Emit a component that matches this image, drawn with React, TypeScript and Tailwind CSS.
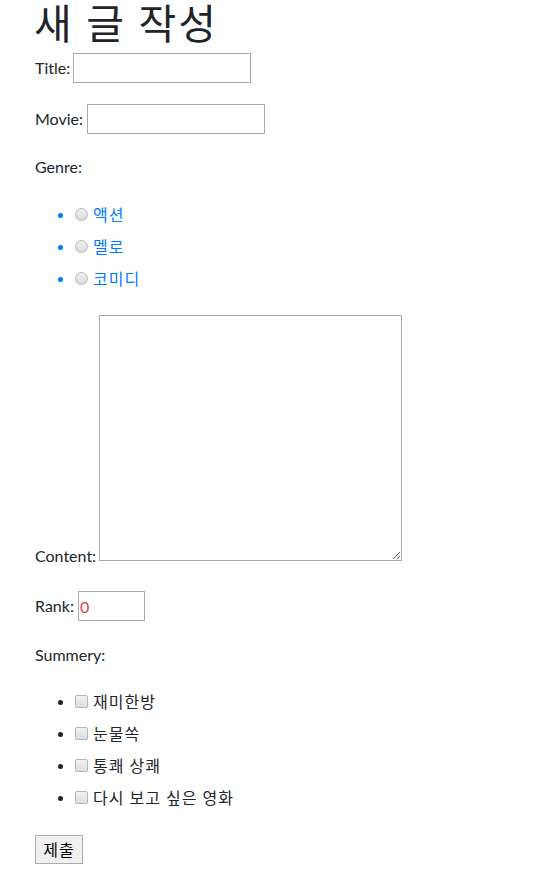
import React from "react";

const font = { fontFamily: 'Lato, "Noto Sans CJK KR", sans-serif' };

export default function App() {
  const genres = ["액션", "멜로", "코미디"];
  const summaries = ["재미한방", "눈물쏙", "통쾌 상쾌", "다시 보고 싶은 영화"];
  return (
    <div
      className="flex flex-col px-[35px] text-[16px] text-[#212529] bg-white min-h-[871px]"
      style={font}
    >
      <h1 className="text-[41px] leading-[48px] font-normal tracking-[2px] -ml-[1px] whitespace-nowrap">새 글 작성</h1>

      <div className="mt-[5px] flex items-center h-[30px]">
        <span className="leading-6">Title:</span>
        <input type="text" className="ml-[3px] w-[178px] h-[30px] border border-[#a9a9a9] outline-none" />
      </div>

      <div className="mt-[21px] flex items-center h-[30px]">
        <span className="leading-6">Movie:</span>
        <input type="text" className="ml-[4px] w-[178px] h-[30px] border border-[#a9a9a9] outline-none" />
      </div>

      <div className="mt-[21px] h-6 leading-6">Genre:</div>

      <ul className="mt-[19px] pl-[40px] list-disc marker:text-[#007bff]">
        {genres.map((g) => (
          <li key={g} className="h-[32px] leading-[32px] text-[#007bff]">
            <span className="inline-flex items-center align-middle h-[32px] -mt-[2px]">
              <input
                type="radio"
                name="genre"
                className="appearance-none w-[13px] h-[13px] rounded-full border border-[#b5b5b5] bg-gradient-to-b from-[#f2f2f2] to-[#d9d9d9] m-0"
              />
              <span className="ml-[5px] leading-6 tracking-[1px]">{g}</span>
            </span>
          </li>
        ))}
      </ul>

      <div className="mt-[21px] flex items-end">
        <span className="leading-6 -mb-[7px]">Content:</span>
        <textarea className="ml-[3px] w-[303px] h-[246px] border border-[#a9a9a9] outline-none resize-y" />
      </div>

      <div className="mt-[30px] flex items-center h-[30px]">
        <span className="leading-6">Rank:</span>
        <input
          type="number"
          defaultValue={0}
          className="ml-[4px] w-[67px] h-[30px] border border-[#a9a9a9] outline-none pl-[1px] text-[#e0434b] [appearance:textfield]"
        />
      </div>

      <div className="mt-[22px] h-6 leading-6">Summery:</div>

      <ul className="mt-[18px] pl-[40px] list-disc">
        {summaries.map((s) => (
          <li key={s} className="h-[32px] leading-[32px]">
            <span className="inline-flex items-center align-middle h-[32px] -mt-[2px]">
              <input
                type="checkbox"
                className="appearance-none w-[13px] h-[13px] rounded-[2px] border border-[#b5b5b5] bg-gradient-to-b from-[#f2f2f2] to-[#dcdcdc] m-0"
              />
              <span className="ml-[5px] leading-6 tracking-[1px]">{s}</span>
            </span>
          </li>
        ))}
      </ul>

      <div className="mt-[22px]">
        <button className="w-[48px] h-[29px] border border-[#adadad] bg-[#f0f0f0] text-[16px] leading-none text-black tracking-[1px]">
          제출
        </button>
      </div>
    </div>
  );
}
